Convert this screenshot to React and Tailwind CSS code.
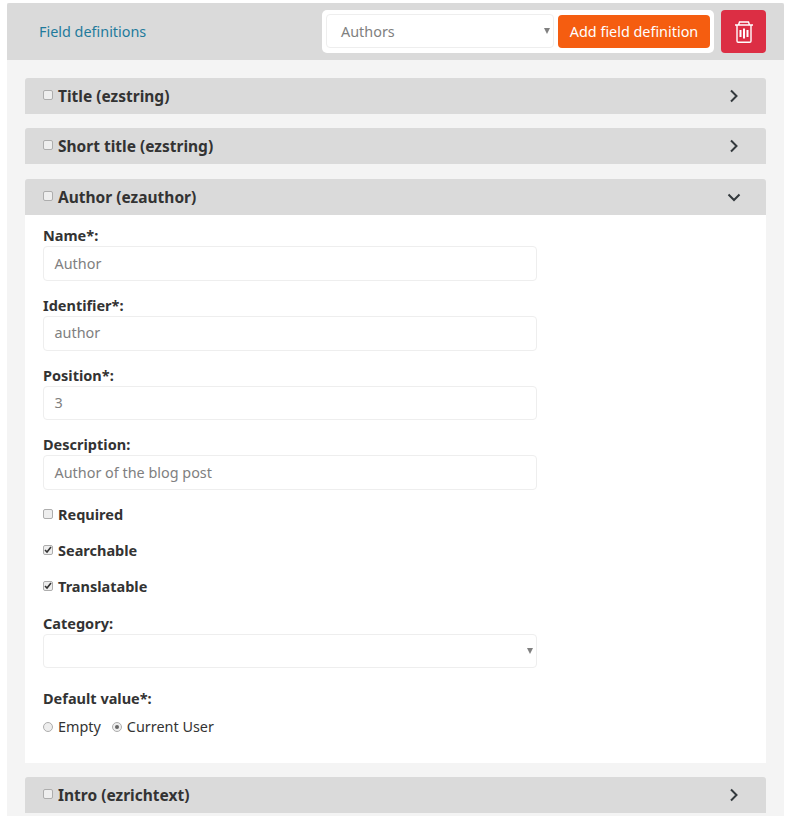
import React from 'react';

const font = { fontFamily: '"Noto Sans", sans-serif' };

function Chevron({ open }) {
    return (
        <svg width="16" height="16" viewBox="0 0 16 16" fill="none" stroke="#33393d" strokeWidth="2" className="shrink-0">
            {open ? <path d="M2.5 5.5L8 11l5.5-5.5" /> : <path d="M5 2.5L10.5 8 5 13.5" />}
        </svg>
    );
}

function Box({ checked }) {
    return (
        <span className="w-[10px] h-[10px] rounded-[2px] border border-[#adadad] bg-[#eeeeee] flex items-center justify-center shrink-0">
            {checked && (
                <svg width="8" height="8" viewBox="0 0 8 8" fill="none" stroke="#333" strokeWidth="1.6">
                    <path d="M1 4l2 2 4-5" />
                </svg>
            )}
        </span>
    );
}

function Radio({ checked }) {
    return (
        <span className="w-[10px] h-[10px] rounded-full border border-[#adadad] bg-[#eeeeee] flex items-center justify-center shrink-0">
            {checked && <span className="w-[4px] h-[4px] rounded-full bg-[#666]"></span>}
        </span>
    );
}

function SectionHead({ title, open, className }) {
    return (
        <div className={`h-[36px] bg-[#dadada] rounded-t-[3px] pl-[18px] pr-[24px] flex items-center justify-between ${className || ''}`}>
            <div className="flex items-center gap-[5px]">
                <span className="-mt-[2px]"><Box /></span>
                <span className="text-[15.5px] font-bold text-[#333] mt-px">{title}</span>
            </div>
            <Chevron open={open} />
        </div>
    );
}

function Caret() {
    return (
        <span className="absolute right-[3px] top-[13px] w-0 h-0 border-l-[3px] border-r-[3px] border-t-[6px] border-l-transparent border-r-transparent border-t-[#808080]"></span>
    );
}

function Field({ label, value, select, className }) {
    return (
        <div className={className}>
            <label className="block text-[14.5px] leading-[19px] mb-px font-bold text-[#333]">{label}</label>
            <div className="relative w-[494px] h-[34.67px] border border-[#eeeeee] rounded-[4px] bg-white px-[10.5px] flex items-center text-[14.4px] text-[#808080]">
                {value}
                {select && <Caret />}
            </div>
        </div>
    );
}

function Check({ label, checked, className }) {
    return (
        <div className={`flex items-center gap-[5px] h-[20px] ${className || ''}`}>
            <span className="-mt-[2px]"><Box checked={checked} /></span>
            <span className="text-[14.5px] font-bold text-[#333]">{label}</span>
        </div>
    );
}

export default function App() {
    return (
        <div className="bg-white h-[816px] overflow-hidden pt-[3px] pl-[7px] pr-[7px]" style={font}>
            <div className="bg-[#f4f4f4] h-[813px]">
                <div className="h-[57px] bg-[#dadada] flex items-center justify-between pl-[32px] pr-[18px] rounded-t-[2px]">
                    <span className="text-[14.4px] text-[#1f7a9c]">Field definitions</span>
                    <div className="flex items-center gap-[7px]">
                        <div className="bg-white rounded-[5px] pt-[4px] pb-[5px] px-[4px] flex items-start gap-[4px]">
                            <div className="relative w-[228px] h-[34px] border border-[#eeeeee] rounded-[4px] pl-[14px] pt-px flex items-center text-[14.4px] text-[#808080]">
                                Authors
                                <Caret />
                            </div>
                            <div className="h-[33px] mt-px w-[152px] bg-[#f55d10] rounded-[4px] flex items-center justify-center text-[14.4px] text-white">
                                Add field definition
                            </div>
                        </div>
                        <div className="w-[45px] h-[43px] bg-[#dc2e44] rounded-[4px] flex items-center justify-center">
                            <svg width="18" height="22" viewBox="0 0 18 22" fill="none" stroke="#fff" strokeWidth="1.4">
                                <path d="M0 4h18M3.5 4l1-3h9l1 3M2 4v16a1.2 1.2 0 0 0 1.2 1.2h11.6A1.2 1.2 0 0 0 16 20V4" />
                                <path d="M5.5 9v7M9 7.5v10M12.5 9v7" strokeWidth="2" />
                            </svg>
                        </div>
                    </div>
                </div>
                <div className="px-[18px] pt-[18px]">
                    <SectionHead title="Title (ezstring)" />
                    <SectionHead title="Short title (ezstring)" className="mt-[14px]" />
                    <SectionHead title="Author (ezauthor)" open className="mt-[15px]" />
                    <div className="bg-white pl-[18px] pt-[11.2px] h-[548px]">
                        <Field label="Name*:" value="Author" />
                        <Field label="Identifier*:" value="author" className="mt-[15px]" />
                        <Field label="Position*:" value="3" className="mt-[15px]" />
                        <Field label="Description:" value="Author of the blog post" className="mt-[15px]" />
                        <Check label="Required" className="mt-[15px]" />
                        <Check label="Searchable" checked className="mt-[16px]" />
                        <Check label="Translatable" checked className="mt-[16px]" />
                        <Field label="Category:" value="" select className="mt-[16.7px]" />
                        <div className="mt-[20px] text-[14.5px] leading-[20px] font-bold text-[#333]">Default value*:</div>
                        <div className="flex items-center h-[20px] mt-[9px] text-[14.4px] text-[#333]">
                            <span className="-mt-px"><Radio /></span>
                            <span className="ml-[5px]">Empty</span>
                            <span className="ml-[11px] -mt-px"><Radio checked /></span>
                            <span className="ml-[5px]">Current User</span>
                        </div>
                    </div>
                    <SectionHead title="Intro (ezrichtext)" className="mt-[14px]" />
                </div>
            </div>
        </div>
    );
}
